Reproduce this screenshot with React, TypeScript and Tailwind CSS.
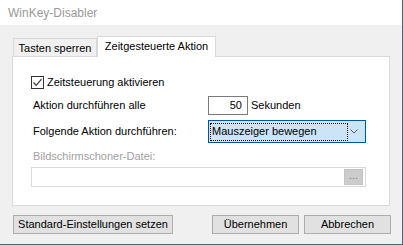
function WinButton({ label, className = '' }: { label: string; className?: string }) {
  return (
    <button
      type="button"
      className={`flex h-[19px] items-center justify-center whitespace-nowrap border border-[#adadad] bg-[#e1e1e1] leading-none text-black ${className}`}
    >
      {label}
    </button>
  );
}

export default function App() {
  return (
    <div className="flex h-[245px] w-[403px] flex-col whitespace-nowrap border-r border-b border-[#1c7a80] font-['Liberation_Sans',Arial,sans-serif] text-[11px] text-black">
      {/* title bar (inactive window) */}
      <div className="flex h-[25px] items-center bg-white pl-2 text-[12px] text-[#999999]">WinKey-Disabler</div>

      <div className="flex-1 bg-[#f0f0f0] pl-3">
        {/* tabs */}
        <div className="mt-[11px] flex h-[20px] items-end pl-px">
          <div className="flex h-[18px] w-[84px] items-center justify-center border border-b-0 border-[#d9d9d9] bg-[#f0f0f0] pt-px leading-none">
            Tasten sperren
          </div>
          <div className="relative z-10 -mb-px flex h-[21px] w-[119px] items-start justify-center border border-b-0 border-[#d9d9d9] bg-white pt-[4px] leading-none">
            Zeitgesteuerte Aktion
          </div>
        </div>

        {/* tab panel */}
        <div className="flex h-[150px] w-[378px] flex-col border border-[#d9d9d9] bg-white pl-[18px]">
          <div className="mt-[19px] flex h-[13px] items-center">
            <div className="flex h-[13px] w-[13px] items-center justify-center border border-[#333333] bg-white">
              <svg viewBox="0 0 11 11" className="h-[11px] w-[11px]" fill="none" stroke="#333333" strokeWidth="1.2">
                <path d="M1.5 5.5 L4.2 8.3 L9.5 2.2" />
              </svg>
            </div>
            <span className="ml-[3px] leading-none">Zeitsteuerung aktivieren</span>
          </div>

          <div className="mt-[7px] flex h-[19px] items-center">
            <span className="w-[177px] pl-[2px] leading-none">Aktion durchführen alle</span>
            <div className="flex h-[19px] w-[40px] items-center justify-end border border-[#7a7a7a] bg-white pr-[5px] leading-none">
              50
            </div>
            <span className="ml-[3px] leading-none">Sekunden</span>
          </div>

          <div className="mt-[5px] flex h-[23px] items-center">
            <span className="w-[177px] pl-[2px] leading-none">Folgende Aktion durchführen:</span>
            <div className="flex h-[23px] w-[158px] items-center border border-[#0055a0] bg-[#cce4f7] pl-px pr-[7px]">
              <div className="flex h-[18px] w-[138px] items-center border border-dotted border-black pl-px leading-none">
                Mauszeiger bewegen
              </div>
              <svg viewBox="0 0 8 5" className="ml-auto h-[5px] w-[8px]" fill="none" stroke="#606060" strokeWidth="1">
                <path d="M0.5 0.5 L4 4 L7.5 0.5" />
              </svg>
            </div>
          </div>

          <div className="mt-[6px] flex h-[15px] items-center pl-[2px] leading-none text-[#a0a0a0]">
            Bildschirmschoner-Datei:
          </div>

          <div className="mt-[3px] flex h-[20px] w-[335px] items-center justify-end border border-[#d9d9d9] bg-white pr-[2px]">
            <div className="flex h-[16px] w-[19px] items-center justify-center border border-[#c4c4c4] bg-[#cccccc] pb-[3px] text-[11px] leading-none text-[#838383]">
              ...
            </div>
          </div>
        </div>

        {/* bottom buttons */}
        <div className="mt-[9px] flex w-[379px] pl-px">
          <WinButton label="Standard-Einstellungen setzen" className="w-[160px]" />
          <div className="ml-auto flex gap-[5px]">
            <WinButton label="Übernehmen" className="w-[87px]" />
            <WinButton label="Abbrechen" className="w-[87px]" />
          </div>
        </div>
      </div>
    </div>
  );
}
